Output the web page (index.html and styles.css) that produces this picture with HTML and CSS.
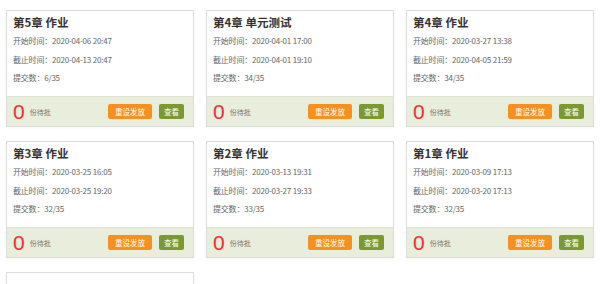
FILE: index.html
```html
<!DOCTYPE html>
<html lang="zh-CN">
<head>
  <meta charset="UTF-8" />
  <title>作业列表</title>
  <link rel="stylesheet" href="styles.css">
</head>
<body>

<div class="work-list">
  <div class="work-card">
    <div class="work-body">
      <h3>第5章 作业</h3>
      <p>开始时间：2020-04-06 20:47</p>
      <p>截止时间：2020-04-13 20:47</p>
      <p>提交数：6/35</p>
    </div>
    <div class="work-foot">
      <span class="pending"><b>0</b>份待批</span>
      <button class="btn btn-orange">重设发放</button>
      <button class="btn btn-green">查看</button>
    </div>
  </div>

  <div class="work-card">
    <div class="work-body">
      <h3>第4章 单元测试</h3>
      <p>开始时间：2020-04-01 17:00</p>
      <p>截止时间：2020-04-01 19:10</p>
      <p>提交数：34/35</p>
    </div>
    <div class="work-foot">
      <span class="pending"><b>0</b>份待批</span>
      <button class="btn btn-orange">重设发放</button>
      <button class="btn btn-green">查看</button>
    </div>
  </div>

  <div class="work-card">
    <div class="work-body">
      <h3>第4章 作业</h3>
      <p>开始时间：2020-03-27 13:38</p>
      <p>截止时间：2020-04-05 21:59</p>
      <p>提交数：34/35</p>
    </div>
    <div class="work-foot">
      <span class="pending"><b>0</b>份待批</span>
      <button class="btn btn-orange">重设发放</button>
      <button class="btn btn-green">查看</button>
    </div>
  </div>

  <div class="work-card">
    <div class="work-body">
      <h3>第3章 作业</h3>
      <p>开始时间：2020-03-25 16:05</p>
      <p>截止时间：2020-03-25 19:20</p>
      <p>提交数：32/35</p>
    </div>
    <div class="work-foot">
      <span class="pending"><b>0</b>份待批</span>
      <button class="btn btn-orange">重设发放</button>
      <button class="btn btn-green">查看</button>
    </div>
  </div>

  <div class="work-card">
    <div class="work-body">
      <h3>第2章 作业</h3>
      <p>开始时间：2020-03-13 19:31</p>
      <p>截止时间：2020-03-27 19:33</p>
      <p>提交数：33/35</p>
    </div>
    <div class="work-foot">
      <span class="pending"><b>0</b>份待批</span>
      <button class="btn btn-orange">重设发放</button>
      <button class="btn btn-green">查看</button>
    </div>
  </div>

  <div class="work-card">
    <div class="work-body">
      <h3>第1章 作业</h3>
      <p>开始时间：2020-03-09 17:13</p>
      <p>截止时间：2020-03-20 17:13</p>
      <p>提交数：32/35</p>
    </div>
    <div class="work-foot">
      <span class="pending"><b>0</b>份待批</span>
      <button class="btn btn-orange">重设发放</button>
      <button class="btn btn-green">查看</button>
    </div>
  </div>

  <!-- next card starts just above the fold -->
  <div class="work-card">
    <div class="work-body"></div>
  </div>
</div>

</body>
</html>
```

FILE: styles.css
```css
body {
  margin: 0;
  background: #fff;
  font-family: "Noto Sans CJK SC", "Noto Sans", sans-serif;
  color: #555;
}
.work-list {
  display: grid;
  grid-template-columns: repeat(3, 188px);
  column-gap: 12px;
  row-gap: 14px;
  padding: 10px 6px;
}
.work-card {
  border: 1px solid #dcdcdc;
  background: #fff;
  box-shadow: 0 1px 2px rgba(0,0,0,0.04);
}
.work-body {
  height: 82px;
  padding: 3px 6px 0;
}
.work-body h3 {
  margin: 0 0 2px;
  font-size: 11.5px;
  line-height: 16px;
  font-weight: bold;
  color: #333;
}
.work-body p {
  margin: 0;
  font-size: 8px;
  line-height: 18.5px;
  letter-spacing: -0.2px;
  color: #666;
}
.work-foot {
  display: flex;
  align-items: center;
  height: 29px;
  padding: 0 9px 0 6px;
  background: #e9eddc;
  border-top: 1px solid #dfe3d0;
}
.pending {
  flex: 1;
  font-size: 7px;
  color: #777;
  display: flex;
  align-items: center;
}
.pending b {
  font-family: "Liberation Sans", Arial, sans-serif;
  font-size: 21px;
  font-weight: normal;
  color: #f52a2a;
  margin-right: 5px;
  line-height: 20px;
}
.btn {
  border: none;
  border-radius: 2px;
  color: #fff;
  font-family: inherit;
  font-size: 7.5px;
  height: 15px;
  line-height: 15px;
  padding: 0;
  cursor: pointer;
}
.btn-orange {
  width: 44px;
  background: #f7901e;
}
.btn-green {
  width: 25px;
  margin-left: 7px;
  background: #7a9a31;
}
```
